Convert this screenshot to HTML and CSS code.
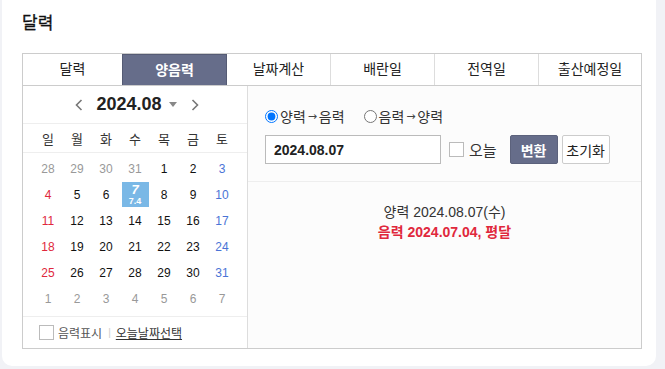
FILE: index.html
```html
<!DOCTYPE html>
<html lang="ko">
<head>
    <meta charset="UTF-8">
    <meta name="viewport" content="width=device-width, initial-scale=1.0">
    <title>달력</title>
    <link rel="stylesheet" href="styles.css">
</head>
<body>
    <div class="card">
        <h2 class="card-title">달력</h2>

        <div class="box">
            <ul class="tabs">
                <li class="t1">달력</li>
                <li class="t2 on">양음력</li>
                <li class="t3">날짜계산</li>
                <li class="t4">배란일</li>
                <li class="t5">전역일</li>
                <li class="t6">출산예정일</li>
            </ul>

            <div class="box-body">
                <div class="cal">
                    <div class="cal-head">
                        <svg class="arrow prev" width="8" height="12" viewBox="0 0 8 12"><polyline points="6.5,1 1.5,6 6.5,11" fill="none" stroke="#777" stroke-width="1.6"/></svg>
                        <span class="cal-month">2024.08</span>
                        <span class="caret"></span>
                        <svg class="arrow next" width="8" height="12" viewBox="0 0 8 12"><polyline points="1.5,1 6.5,6 1.5,11" fill="none" stroke="#777" stroke-width="1.6"/></svg>
                    </div>
                    <div class="week">
                        <span>일</span><span>월</span><span>화</span><span>수</span><span>목</span><span>금</span><span>토</span>
                    </div>
                    <div class="days">
                        <span class="off">28</span><span class="off">29</span><span class="off">30</span><span class="off">31</span><span>1</span><span>2</span><span class="sat">3</span>
                        <span class="sun">4</span><span>5</span><span>6</span><span class="today"><b>7</b><i>7.4</i></span><span>8</span><span>9</span><span class="sat">10</span>
                        <span class="sun">11</span><span>12</span><span>13</span><span>14</span><span>15</span><span>16</span><span class="sat">17</span>
                        <span class="sun">18</span><span>19</span><span>20</span><span>21</span><span>22</span><span>23</span><span class="sat">24</span>
                        <span class="sun">25</span><span>26</span><span>27</span><span>28</span><span>29</span><span>30</span><span class="sat">31</span>
                        <span class="off">1</span><span class="off">2</span><span class="off">3</span><span class="off">4</span><span class="off">5</span><span class="off">6</span><span class="off">7</span>
                    </div>
                    <div class="cal-foot">
                        <span class="chk"></span>
                        <span class="foot-label">음력표시</span>
                        <span class="bar">|</span>
                        <a class="foot-link">오늘날짜선택</a>
                    </div>
                </div>

                <div class="conv">
                    <div class="conv-form">
                        <div class="radios">
                            <label><input type="radio" name="mode" checked>양력<span class="arr">→</span>음력</label>
                            <label><input type="radio" name="mode">음력<span class="arr">→</span>양력</label>
                        </div>
                        <div class="inputs">
                            <input class="date-input" type="text" value="2024.08.07">
                            <span class="chk chk-today"></span>
                            <span class="today-label">오늘</span>
                            <button class="btn btn-main">변환</button>
                            <button class="btn">초기화</button>
                        </div>
                    </div>
                    <div class="result">
                        <p class="solar">양력 2024.08.07(수)</p>
                        <p class="lunar">음력 <b>2024.07.04,</b> 평달</p>
                    </div>
                </div>
            </div>
        </div>
    </div>
</body>
</html>
```

FILE: styles.css
```css
body
{
    margin: 0;
    background: #f1f2f6;
    font-family: "Liberation Sans", "Noto Sans CJK KR", sans-serif;
    color: #222;
}
.card
{
    background: #fff;
    margin: 0 9px 0 2px;
    height: 366px;
    border-radius: 0 0 10px 10px;
    padding: 12px 0 0 20px;
    box-sizing: border-box;
}
.card-title
{
    margin: 0;
    font-size: 17px;
    line-height: 24px;
    font-weight: normal;
    color: #111;
    -webkit-text-stroke: 0.3px #111;
}
.box
{
    margin-top: 17px;
    width: 620px;
    border: 1px solid #ccc;
    box-sizing: border-box;
}
.tabs
{
    display: flex;
    margin: 0;
    padding: 0;
    list-style: none;
    border-bottom: 1px solid #ccc;
}
.tabs li
{
    height: 31px;
    line-height: 31px;
    text-align: center;
    font-size: 14px;
    color: #222;
    border-left: 1px solid #ddd;
    box-sizing: border-box;
}
.tabs .t1 { width: 99px; border-left: none; }
.tabs .t2 { width: 105px; }
.tabs .t3 { width: 103px; }
.tabs .t4 { width: 104px; }
.tabs .t5 { width: 104px; }
.tabs .t6 { flex: 1; }
.tabs li.on
{
    background: #666d8a;
    color: #fff;
    font-weight: bold;
    border: 1px solid #555b74;
    border-bottom: none;
    line-height: 30px;
}
.tabs li.on + li
{
    border-left: none;
}
.box-body
{
    display: flex;
    height: 262px;
}
.cal
{
    width: 224px;
    border-right: 1px solid #ddd;
    background: #fff;
    display: flex;
    flex-direction: column;
}
.cal-head
{
    height: 37px;
    border-bottom: 1px solid #eee;
    display: flex;
    align-items: center;
    justify-content: center;
}
.cal-month
{
    font-size: 18px;
    font-weight: bold;
    color: #222;
}
.arrow.prev
{
    margin-right: 13px;
    margin-left: 4px;
}
.arrow.next
{
    margin-left: 14px;
}
.caret
{
    width: 0;
    height: 0;
    border-left: 4px solid transparent;
    border-right: 4px solid transparent;
    border-top: 5px solid #888;
    margin-left: 7px;
}
.week,
.days
{
    display: grid;
    grid-template-columns: repeat(7, 29px);
    justify-content: center;
}
.week
{
    height: 28px;
    border-bottom: 1px solid #eee;
    align-items: center;
}
.week span
{
    text-align: center;
    font-size: 13px;
    color: #333;
}
.days
{
    grid-auto-rows: 25px;
    row-gap: 1px;
    padding: 3px 0 5px;
    border-bottom: 1px solid #eee;
}
.days span
{
    display: flex;
    align-items: center;
    justify-content: center;
    font-size: 12px;
    color: #111;
    margin: 0 1px;
}
.days .off
{
    color: #999;
}
.days .sun
{
    color: #e0283c;
}
.days .sat
{
    color: #4a74d6;
}
.days .today
{
    background: #7ab8e6;
    color: #fff;
    flex-direction: column;
}
.today b
{
    font-size: 13px;
    line-height: 13px;
    font-style: italic;
}
.today i
{
    font-style: normal;
    font-weight: bold;
    font-size: 9px;
    line-height: 10px;
}
.cal-foot
{
    flex: 1;
    display: flex;
    align-items: center;
    padding-left: 16px;
    font-size: 12px;
}
.chk
{
    width: 13px;
    height: 13px;
    border: 1px solid #bbb;
    background: #fff;
    display: inline-block;
}
.foot-label
{
    margin-left: 4px;
    color: #555;
}
.bar
{
    color: #ccc;
    font-size: 10px;
    margin: 0 5px 0 6px;
}
.foot-link
{
    color: #333;
    text-decoration: underline;
}
.conv
{
    flex: 1;
    background: #fcfcfc;
}
.conv-form
{
    padding: 20px 0 17px 17px;
    border-bottom: 1px solid #eee;
}
.radios
{
    display: flex;
    gap: 19px;
    height: 20px;
    align-items: center;
    font-size: 14px;
    color: #333;
}
.radios label
{
    display: flex;
    align-items: center;
}
.radios input
{
    margin: 0 2px 0 0;
    width: 13px;
    height: 13px;
}
.arr
{
    display: inline-block;
    width: 13px;
    text-align: center;
    font-family: "DejaVu Sans", sans-serif;
    font-size: 11px;
    color: #444;
}
.inputs
{
    display: flex;
    align-items: center;
    margin-top: 9px;
    height: 29px;
}
.date-input
{
    width: 176px;
    height: 29px;
    box-sizing: border-box;
    border: 1px solid #bbb;
    padding: 0 0 0 8px;
    margin: 0;
    font-family: "Liberation Sans", sans-serif;
    font-size: 14px;
    font-weight: bold;
    color: #222;
    background: #fff;
}
.chk-today
{
    margin-left: 8px;
}
.today-label
{
    margin-left: 5px;
    font-size: 15px;
    color: #333;
}
.btn
{
    height: 29px;
    width: 48px;
    padding: 0;
    box-sizing: border-box;
    border: 1px solid #ccc;
    background: #fff;
    font-family: "Liberation Sans", "Noto Sans CJK KR", sans-serif;
    font-size: 14px;
    color: #222;
    margin-left: 4px;
    border-radius: 2px;
}
.btn-main
{
    margin-left: 13px;
    background: #666d8a;
    border-color: #5c627c;
    color: #fff;
    font-weight: bold;
}
.result
{
    text-align: center;
    padding-top: 20px;
    font-size: 14px;
}
.result p
{
    margin: 0;
    line-height: 20px;
}
.solar
{
    color: #333;
}
.lunar
{
    color: #e0283c;
    font-weight: bold;
}
```
